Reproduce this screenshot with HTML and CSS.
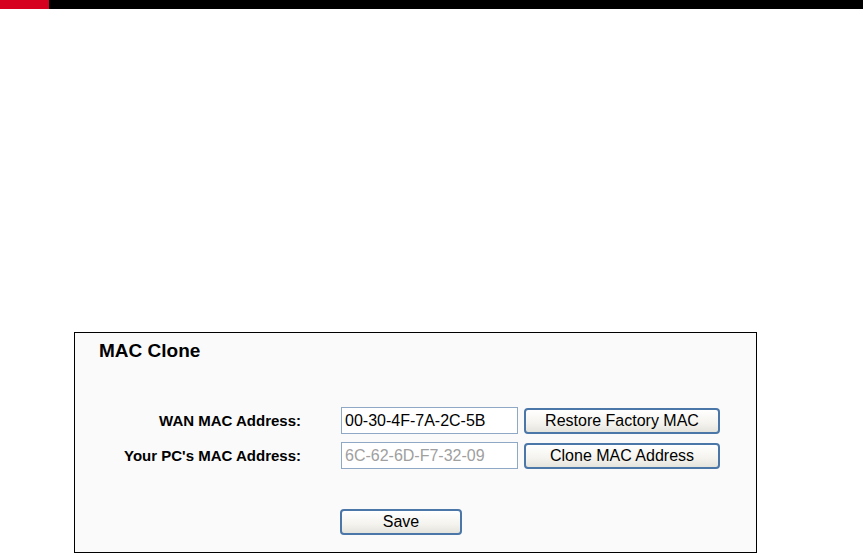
FILE: index.html
```html
<!DOCTYPE html>
<html lang="en">

<head>
  <meta charset="UTF-8" />
  <meta name="viewport" content="width=device-width, initial-scale=1.0" />
  <title>MAC Clone</title>
  <link rel="stylesheet" href="styles.css">
</head>

<body>
  <div class="topbar">
    <div class="topbar-red"></div>
  </div>

  <div class="content">
    <div class="panel">
      <p class="panel-title">MAC Clone</p>

      <form class="mac-form" action="#" method="get">
        <div class="form-row">
          <label class="form-label" for="wan_mac">WAN MAC Address:</label>
          <input class="text-input" type="text" id="wan_mac" name="wan_mac" value="00-30-4F-7A-2C-5B" />
          <button class="btn btn-wide" type="button">Restore Factory MAC</button>
        </div>
        <div class="form-row">
          <label class="form-label" for="pc_mac">Your PC's MAC Address:</label>
          <input class="text-input text-input-readonly" type="text" id="pc_mac" name="pc_mac" value="6C-62-6D-F7-32-09" readonly />
          <button class="btn btn-wide" type="button">Clone MAC Address</button>
        </div>
        <div class="form-save">
          <button class="btn btn-save" type="submit">Save</button>
        </div>
      </form>
    </div>
  </div>
</body>

</html>
```

FILE: styles.css
```css
body,
div,
form,
html,
p {
  margin: 0;
  padding: 0;
}

body {
  background: #fff;
  font-family: "Liberation Sans", Arial, sans-serif;
  color: #000;
}

.topbar {
  height: 9px;
  background: #000;
}

.topbar-red {
  width: 49px;
  height: 9px;
  background: #d6001f;
}

.content {
  padding: 323px 0 0 74px;
}

.panel {
  box-sizing: border-box;
  width: 683px;
  height: 221px;
  border: 1px solid #000;
  background: #fafafa;
  padding: 7px 0 0 24px;
}

.panel-title {
  font-size: 19px;
  font-weight: bold;
  line-height: 22px;
}

.mac-form {
  margin-top: 45px;
  margin-left: -24px;
}

.form-row {
  display: flex;
  align-items: center;
  height: 27px;
  margin-bottom: 8px;
}

.form-label {
  width: 226px;
  margin-right: 40px;
  text-align: right;
  font-size: 15px;
  font-weight: bold;
}

.text-input {
  box-sizing: border-box;
  width: 177px;
  height: 27px;
  margin: 0;
  padding: 0 3px;
  border: 1px solid #8ea8c6;
  background: #fff;
  font-family: "Liberation Sans", Arial, sans-serif;
  font-size: 16px;
  color: #000;
  outline: none;
}

.text-input-readonly {
  color: #a0a0a0;
}

.btn {
  box-sizing: border-box;
  height: 26px;
  margin: 0;
  padding: 0;
  border: 2px solid #4a76a8;
  border-radius: 4px;
  background: linear-gradient(#ffffff, #f4f3ee 60%, #e4e3dc);
  font-family: "Liberation Sans", Arial, sans-serif;
  font-size: 16px;
  color: #000;
}

.btn-wide {
  width: 196px;
  margin-left: 6px;
}

.form-save {
  padding: 32px 0 0 265px;
}

.btn-save {
  width: 122px;
}
```
